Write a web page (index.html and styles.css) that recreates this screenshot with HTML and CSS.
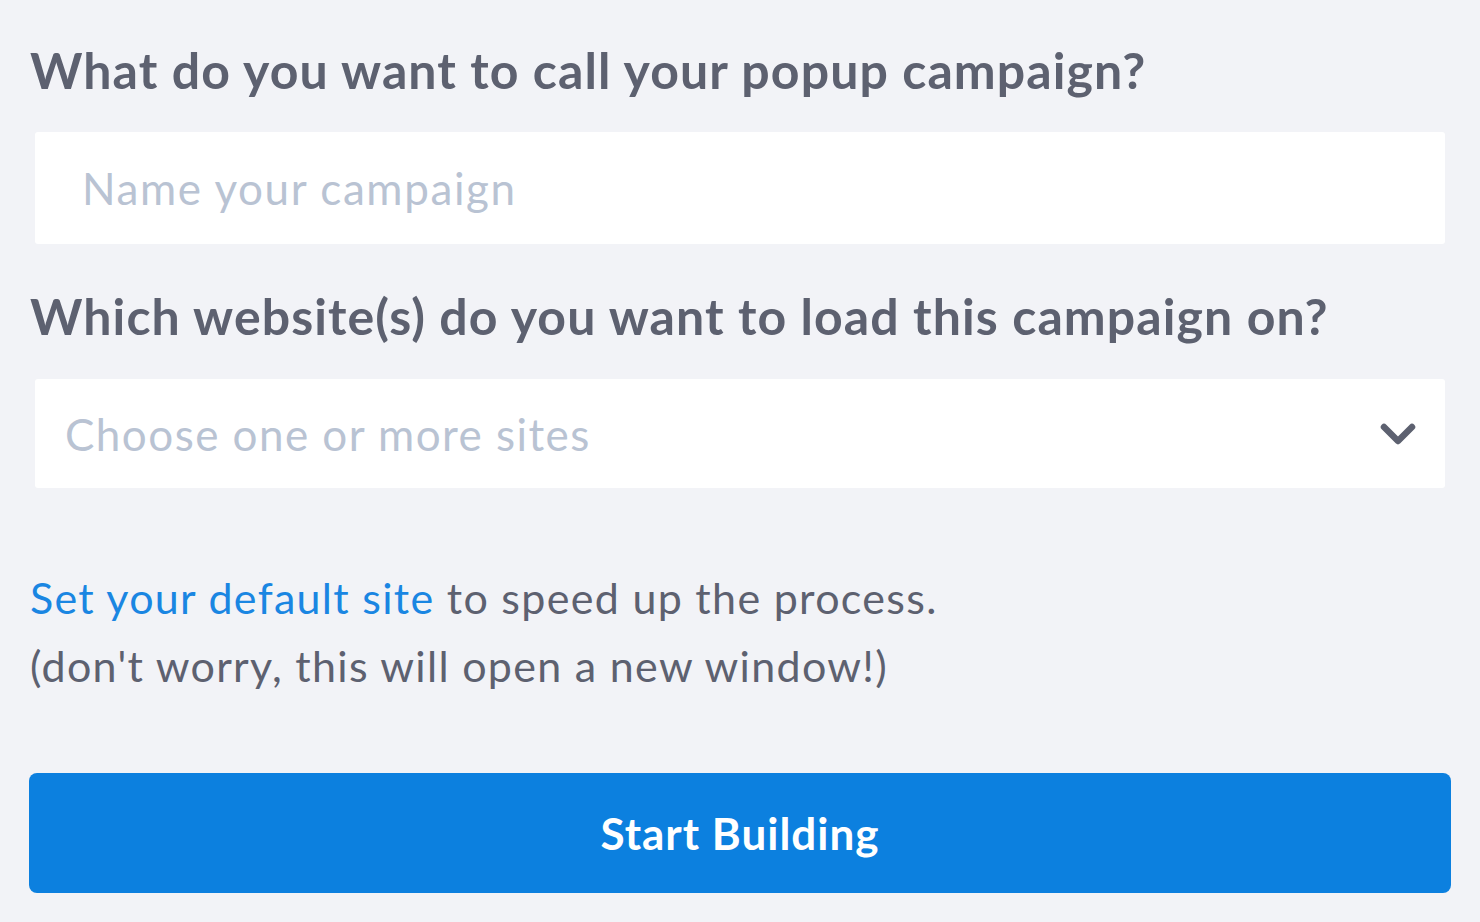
FILE: index.html
```html
<!DOCTYPE html>
<html lang="en">
<head>
<meta charset="utf-8">
<title>New popup campaign</title>
<link rel="stylesheet" href="styles.css">
</head>
<body>
<form class="form">
  <h2 class="question q-name">What do you want to call your popup campaign?</h2>
  <div class="field field-name">
    <input class="text-input" type="text" placeholder="Name your campaign">
  </div>
  <h2 class="question q-sites">Which website(s) do you want to load this campaign on?</h2>
  <div class="field field-select">
    <span class="select-placeholder">Choose one or more sites</span>
    <svg class="chevron" width="36" height="24" viewBox="0 0 36 24" aria-hidden="true">
      <polyline points="4,5 18,19 32,5" fill="none" stroke="#5d6170" stroke-width="6.5" stroke-linecap="round" stroke-linejoin="round"/>
    </svg>
  </div>
  <p class="hint"><a class="hint-link" href="#">Set your default site</a> to speed up the process.<br>(don't worry, this will open a new window!)</p>
  <button class="btn-primary" type="button">Start Building</button>
</form>
</body>
</html>
```
FILE: styles.css
```css
html, body {
  margin: 0;
  padding: 0;
  background: #f2f3f7;
}

body {
  font-family: "Lato", "Open Sans", sans-serif;
  color: #5d6170;
}

.form {
  display: flex;
  flex-direction: column;
  padding: 40px 29px 0 29px;
}

.question {
  margin: 0 0 0 1px;
  font-size: 50px;
  font-weight: 700;
  line-height: 60px;
  letter-spacing: 1.1px;
  color: #5d6170;
}

.q-sites {
  margin-top: 42px;
}

.field {
  margin: 32px 6px 0 6px;
  background: #ffffff;
  border-radius: 3px;
  display: flex;
  align-items: center;
}

.field-name {
  height: 112px;
}

.field-select {
  margin-top: 33px;
  height: 109px;
  padding: 0 29px 0 30px;
  justify-content: space-between;
}

.text-input {
  flex: 1;
  height: 100%;
  border: 0;
  outline: none;
  background: transparent;
  padding: 0 0 0 47px;
  font-family: inherit;
  font-size: 44px;
  letter-spacing: 1.6px;
  color: #5d6170;
}

.text-input::placeholder {
  color: #b9c3d3;
}

.select-placeholder {
  font-size: 44px;
  letter-spacing: 1.45px;
  color: #b9c3d3;
}

.chevron {
  display: block;
}

.hint {
  margin: 76px 0 0 1px;
  font-size: 43px;
  line-height: 68px;
  letter-spacing: 1.3px;
  color: #5d6170;
}

.hint-link {
  color: #1a86e2;
  text-decoration: none;
}

.btn-primary {
  margin-top: 73px;
  height: 120px;
  border: 0;
  border-radius: 8px;
  background: #0c80df;
  color: #ffffff;
  font-family: inherit;
  font-size: 44px;
  font-weight: 700;
  letter-spacing: 1px;
  cursor: pointer;
}
```
